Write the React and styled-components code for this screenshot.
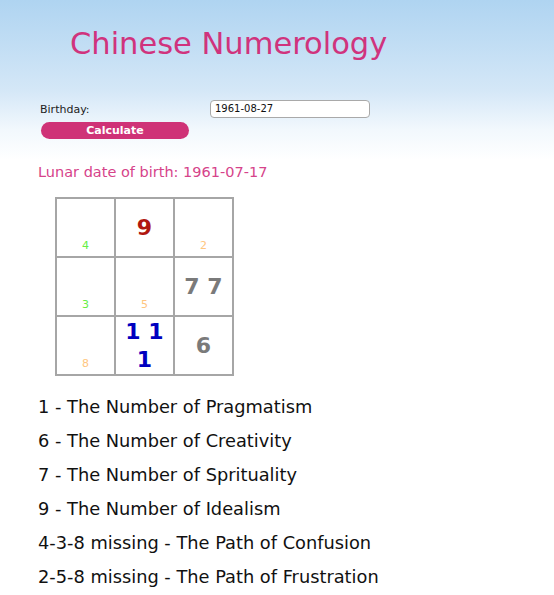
import React from "react"
import styled, { createGlobalStyle } from "styled-components"

const GlobalStyle = createGlobalStyle`
  html, body {
    margin: 0;
    padding: 0;
    background: #fff;
  }
  body {
    font-family: "DejaVu Sans", Verdana, sans-serif;
  }
`

const Page = styled.div`
  min-height: 595px;
  background: linear-gradient(to bottom, #afd4f1 0px, #d4e7f7 90px, #f2f8fd 130px, #ffffff 160px);
  padding: 24px 0 0 38px;
  box-sizing: border-box;
`

const Title = styled.h1`
  margin: 0 0 0 32px;
  font-size: 30.5px;
  font-weight: normal;
  color: #d0337d;
  line-height: 40px;
`

const Form = styled.div`
  margin-top: 36px;
  display: grid;
  grid-template-columns: 172px 160px;
  row-gap: 4px;
  align-items: center;
`

const Label = styled.label`
  font-size: 11px;
  color: #222;
  padding-left: 2px;
`

const DateInput = styled.div`
  height: 18px;
  box-sizing: border-box;
  border: 1px solid #a9a9a9;
  border-radius: 4px;
  background: #fff;
  font-size: 10px;
  line-height: 16px;
  padding-left: 4px;
  color: #111;
`

const Button = styled.button`
  width: 148px;
  height: 17px;
  margin-left: 3px;
  border: none;
  border-radius: 9px;
  background: #cf3277;
  color: #fff;
  font-family: inherit;
  font-weight: bold;
  font-size: 11px;
  padding: 0;
  line-height: 17px;
`

const Lunar = styled.div`
  margin-top: 25px;
  font-size: 14.5px;
  color: #d6438a;
`

const Square = styled.div`
  margin: 17px 0 0 17px;
  display: grid;
  grid-template-columns: repeat(3, 57px);
  grid-auto-rows: 57px;
  gap: 2px;
  padding: 2px;
  background: #a6a6a6;
  width: max-content;
`

const Cell = styled.div`
  background: #fff;
  display: flex;
  flex-direction: column;
  align-items: center;
  justify-content: ${p => (p.$bottom ? "flex-end" : "center")};
  padding-bottom: ${p => (p.$bottom ? "4px" : "0")};
  box-sizing: border-box;
  text-align: center;
`

const Big = styled.div`
  font-size: 22px;
  font-weight: bold;
  line-height: 28px;
  color: ${p => p.$color};
`

const Small = styled.div`
  font-size: 11px;
  color: ${p => p.$color};
`

const List = styled.ul`
  list-style: none;
  margin: 14px 0 0;
  padding: 0;
`

const Item = styled.li`
  font-size: 17.8px;
  line-height: 34px;
  color: #111;
`

const GREEN = "#66ee44"
const ORANGE = "#ffc680"
const RED = "#b0170f"
const GREY = "#7a7a7a"
const BLUE = "#0000c0"

const meanings = [
  "1 - The Number of Pragmatism",
  "6 - The Number of Creativity",
  "7 - The Number of Sprituality",
  "9 - The Number of Idealism",
  "4-3-8 missing - The Path of Confusion",
  "2-5-8 missing - The Path of Frustration",
]

const App = () => (
  <Page>
    <GlobalStyle />
    <Title>Chinese Numerology</Title>
    <Form>
      <Label>Birthday:</Label>
      <DateInput>1961-08-27</DateInput>
      <Button>Calculate</Button>
    </Form>
    <Lunar>Lunar date of birth: 1961-07-17</Lunar>
    <Square>
      <Cell $bottom><Small $color={GREEN}>4</Small></Cell>
      <Cell><Big $color={RED}>9</Big></Cell>
      <Cell $bottom><Small $color={ORANGE}>2</Small></Cell>
      <Cell $bottom><Small $color={GREEN}>3</Small></Cell>
      <Cell $bottom><Small $color={ORANGE}>5</Small></Cell>
      <Cell><Big $color={GREY}>7 7</Big></Cell>
      <Cell $bottom><Small $color={ORANGE}>8</Small></Cell>
      <Cell><Big $color={BLUE}>1 1<br />1</Big></Cell>
      <Cell><Big $color={GREY}>6</Big></Cell>
    </Square>
    <List>
      {meanings.map(m => <Item key={m}>{m}</Item>)}
    </List>
  </Page>
)

export default App
